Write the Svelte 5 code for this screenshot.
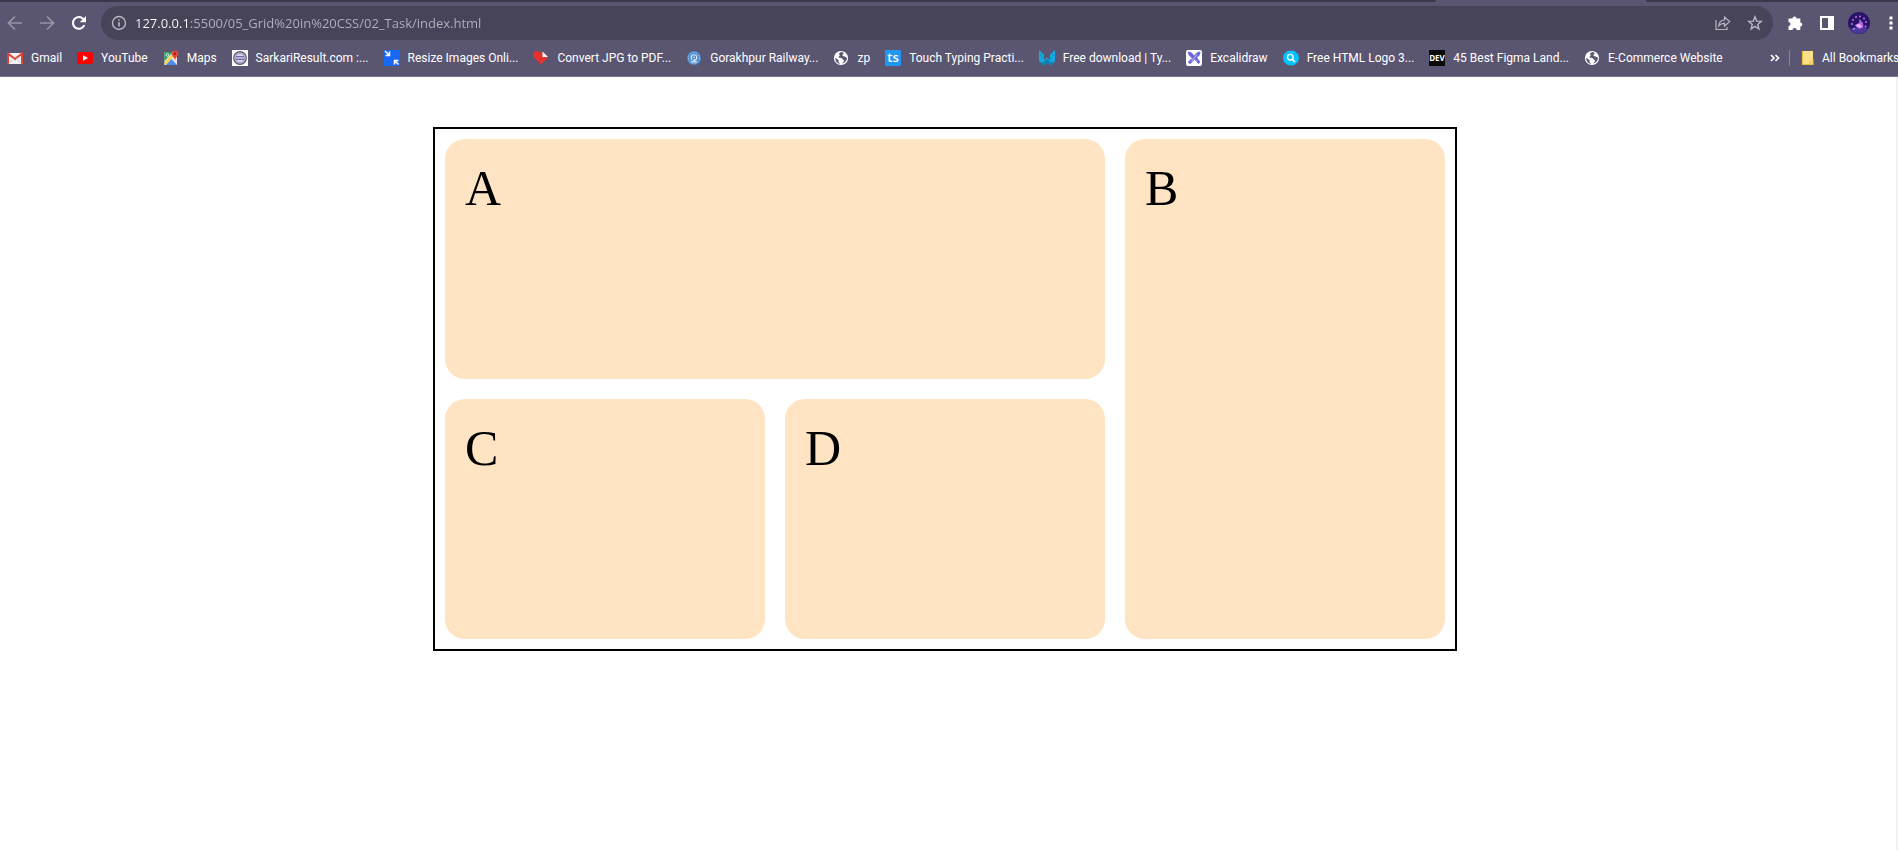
<script>
  let url = $state('127.0.0.1:5500/05_Grid%20in%20CSS/02_Task/index.html');

  const bookmarks = [
    { icon: 'gmail', label: 'Gmail' },
    { icon: 'youtube', label: 'YouTube' },
    { icon: 'maps', label: 'Maps' },
    { icon: 'sarkari', label: 'SarkariResult.com :...' },
    { icon: 'resize', label: 'Resize Images Onli...' },
    { icon: 'heart', label: 'Convert JPG to PDF...' },
    { icon: 'railway', label: 'Gorakhpur Railway...' },
    { icon: 'globe', label: 'zp' },
    { icon: 'ts', label: 'Touch Typing Practi...' },
    { icon: 'wings', label: 'Free download | Ty...' },
    { icon: 'excalidraw', label: 'Excalidraw' },
    { icon: 'search', label: 'Free HTML Logo 3...' },
    { icon: 'dev', label: '45 Best Figma Land...' },
    { icon: 'globe', label: 'E-Commerce Website' }
  ];

  const cells = ['A', 'B', 'C', 'D'];
</script>

{#snippet favicon(name)}
  <svg class="favicon" viewBox="0 0 16 16" aria-hidden="true">
    {#if name === 'gmail'}
      <path d="M1 3h14v11H1z" fill="#f3f1f1" />
      <path d="M1 14V3.500l7 5.500 7-5.500V14" fill="none" stroke="#dc4437" stroke-width="2" />
      <path d="M2 13.500 6.500 8.500M14 13.500 9.500 8.500" stroke="#d6d0d0" stroke-width="1" />
    {:else if name === 'youtube'}
      <rect x="0" y="2" width="16" height="12" rx="2.500" fill="#fe0000" />
      <path d="M6 5.300v5.400L11 8z" fill="#fff" />
    {:else if name === 'maps'}
      <path d="M1.500 2h12.500v13H1.500z" fill="#e8e8e4" />
      <path d="M1.500 2H10L1.500 11z" fill="#25a45c" />
      <path d="M1.500 12.500 10 3l2 2-9.500 10h-1z" fill="#fbd14b" />
      <path d="m3 15 5.500-6L14 15z" fill="#4a8cf4" />
      <path d="m9 8.500 5-3V14z" fill="#e4e4e4" />
      <circle cx="4.500" cy="5" r="1.400" fill="none" stroke="#d9f3e3" />
      <path d="M12 .5a3.300 3.300 0 0 0-3.300 3.300C8.700 6.500 11.500 7 12 10.500c.5-3.500 3.300-4 3.300-6.700A3.300 3.300 0 0 0 12 .5z" fill="#e5473a" />
      <circle cx="12" cy="3.800" r="1.200" fill="#842119" />
    {:else if name === 'sarkari'}
      <path d="M0 0h16v16H0z" fill="#fff" />
      <circle cx="8" cy="8" r="6.300" fill="#c9bedd" stroke="#5b5273" stroke-width="1.200" />
      <circle cx="8" cy="8" r="4.600" fill="#d8d3eb" stroke="#9a8fb5" stroke-width=".8" />
      <path d="M4 6.800h8M4 9.200h8" stroke="#504a86" stroke-width="1.100" />
    {:else if name === 'resize'}
      <path d="M0 0h16v16H0z" fill="#1769f5" />
      <path d="M1 1l4 4M5.500 1.500v4h-4" fill="none" stroke="#fff" stroke-width="1.500" />
      <path d="m14.500 14.500-4-4M10.500 14.500v-4h4" fill="none" stroke="#fff" stroke-width="1.500" />
    {:else if name === 'heart'}
      <path d="M8 14.500 1.500 8C-1 5 .5 1 4 1c2 0 3 .8 4 2l1-1.500 5.500 5c.5.500.5 1-.5 2z" fill="#e5322d" />
      <path d="M9.500 1.500V7H15z" fill="#fff" />
    {:else if name === 'railway'}
      <circle cx="8" cy="8" r="7" fill="#4b8ad0" />
      <circle cx="8" cy="8" r="5.500" fill="none" stroke="#9fc5ee" stroke-width=".9" stroke-dasharray="2 1" />
      <circle cx="8" cy="7.500" r="3.300" fill="#d3e5f7" />
      <path d="M6.800 11V6h2.600v2.600H7" fill="none" stroke="#4178b8" stroke-width="1" />
      <path d="M4.500 12.500 6 10.500h4l1.500 2z" fill="#c5dcf4" />
    {:else if name === 'globe'}
      <circle cx="8" cy="8" r="7.100" fill="#fff" />
      <path d="M2.300 7.800 5.500 10v2l1.700 2A6 6 0 0 1 2.300 7.800z" fill="#5a5672" />
      <path d="M8.200 2c-2.200 1-2.700 2-1.700 2.700 1 .8-.8 1.500-1 2.600-.2 1 3.500.3 4 1.700.3 1 1.600.8 1.700 1.800 0 1-1.700 1.200-1.700 2.700 3-1 4.500-3.200 4.500-5.700-1-.2-1.400-1.500-2.400-1.400-1.300 0-2.200-.4-2.200-1.400S11 4 10.700 2.700z" fill="#5a5672" />
    {:else if name === 'ts'}
      <rect width="16" height="16" rx="1" fill="#2196f3" />
      <text x="8" y="12" text-anchor="middle" class="ts">ts</text>
    {:else if name === 'wings'}
      <path d="M0 0c2 2.500 4 3 5 5v5l3-2.500 3 2.500V5c1-2 3-2.500 5-5v11l-4 4.500L8 13l-4 2.500L0 11z" fill="#12abe2" />
      <path d="m0 11 4 1.500L8 8.500l4 4 4-1.500-4 4.500L8 13l-4 2.500z" fill="#1380b5" />
      <path d="m1 4 4 6M15 4l-4 6" stroke="#0a97cc" stroke-width="1" />
    {:else if name === 'excalidraw'}
      <rect width="16" height="16" rx="2" fill="#fff" />
      <path d="M2 2c3 0 5 1.500 6 4.500C10 3 12 2 14 2c0 2.500-1.200 4.500-3.500 5.500L14 12l-1.500 1.500-4-4.200-4.300 4.500-2-1.700L6.800 8C4 7 2.500 5 2 2z" fill="#6965db" stroke="#6965db" stroke-width=".8" />
      <path d="m5.500 11.500 5.500-7M9 9.500l2 2" stroke="#fff" stroke-width=".6" />
    {:else if name === 'search'}
      <path d="M5 .8h6L15 4l1 4-1 4-4 3.200H5L1 12 0 8l1-4z" fill="#00c4ff" />
      <circle cx="7.300" cy="7.200" r="2.800" fill="none" stroke="#fff" stroke-width="1.400" />
      <path d="m9.300 9.300 2.700 2.700" stroke="#fff" stroke-width="1.600" />
    {:else if name === 'dev'}
      <path d="M0 0h16v16H0z" fill="#0a0a0a" />
      <text x="8" y="11" text-anchor="middle" class="dev">DEV</text>
    {/if}
  </svg>
{/snippet}

<header class="browser">
  <div class="tabstrip"><span class="tab"></span></div>

  <div class="toolbar">
    <button class="tool dim" aria-label="Back">
      <svg width="16" height="16" viewBox="0 0 16 16"><path d="M15 8H2M8 1.500 1.500 8 8 14.500" fill="none" stroke="currentColor" stroke-width="1.700" /></svg>
    </button>
    <button class="tool dim" aria-label="Forward">
      <svg width="16" height="16" viewBox="0 0 16 16"><path d="M1 8h13M8 1.500 14.500 8 8 14.500" fill="none" stroke="currentColor" stroke-width="1.700" /></svg>
    </button>
    <button class="tool" aria-label="Reload">
      <svg width="16" height="16" viewBox="0 0 16 16"><path d="M13.300 10.200A5.900 5.900 0 1 1 12.300 4" fill="none" stroke="currentColor" stroke-width="2.100" /><path d="M15 1v6.300H8.700z" fill="currentColor" /></svg>
    </button>

    <div class="omnibox">
      <svg width="16" height="16" viewBox="0 0 16 16" aria-hidden="true"><circle cx="8" cy="8" r="6.500" fill="none" stroke="currentColor" stroke-width="1.400" /><path d="M8 7v4.500M8 4.200v1.600" stroke="currentColor" stroke-width="1.600" /></svg>
      <input type="text" aria-label="Address" spellcheck="false" bind:value={url} />
      <button class="tool" aria-label="Share">
        <svg width="16" height="16" viewBox="0 0 16 16"><path d="M1 5v9.500h11V12M9.500 2v3C6 5.200 4 7.500 3.700 11c1.500-2 3.200-2.700 5.800-2.700v2.900L14.700 6.500z" fill="none" stroke="currentColor" stroke-width="1.200" /></svg>
      </button>
      <button class="tool" aria-label="Bookmark this page">
        <svg width="16" height="16" viewBox="0 0 16 16"><path d="m8 1.800 1.700 4.300 4.600.3-3.500 3 1.100 4.500L8 11.400l-3.900 2.500 1.100-4.500-3.500-3 4.600-.3z" fill="none" stroke="currentColor" stroke-width="1.400" /></svg>
      </button>
    </div>

    <button class="tool" aria-label="Extensions">
      <svg width="16" height="16" viewBox="0 0 16 16"><path d="M1.500 3.500h4a2 2 0 1 1 4 0h3.800v4a2 2 0 1 1 0 4V15H9.700a2.100 2.100 0 0 0-4.200 0h-4v-3.900a2 2 0 0 0 0-4z" fill="currentColor" /></svg>
    </button>
    <button class="tool" aria-label="Side panel">
      <svg width="16" height="16" viewBox="0 0 16 16"><path d="M1 1h14v14H1zM3 3v10h6V3z" fill="currentColor" fill-rule="evenodd" /></svg>
    </button>
    <button class="tool" aria-label="Profile">
      <svg width="22" height="22" viewBox="0 0 22 22">
        <circle cx="11" cy="11" r="11" fill="#2a1468" />
        <path d="M2 17a11 11 0 0 0 18 0c-4-3-14-3-18 0z" fill="#4b389c" />
        <path d="m7 13 4-2 .5-4 3.500 4 .5 4-4 2z" fill="#b060e4" />
        <path d="m7 13.500 4 2.500 3.500-1-3-3.500z" fill="#eaa8fb" />
        <g fill="#b274e4"><circle cx="5" cy="8" r="1" /><circle cx="8" cy="5" r="1" /><circle cx="12" cy="4.500" r="1" /><circle cx="16" cy="6.500" r="1" /><circle cx="18" cy="10" r="1" /><circle cx="4" cy="12" r="1" /><circle cx="17.500" cy="14.500" r="1" /><circle cx="6" cy="17" r="1" /></g>
      </svg>
    </button>
    <button class="tool menu" aria-label="Menu">
      <svg width="6" height="16" viewBox="0 0 6 16"><path d="M1.500 1.500h3v3h-3zM1.500 6.500h3v3h-3zM1.500 11.500h3v3h-3z" fill="currentColor" /></svg>
    </button>
  </div>

  <nav class="bookmarks" aria-label="Bookmarks">
    <div class="links">
      {#each bookmarks as bookmark}
        <a href="#top">{@render favicon(bookmark.icon)}<span>{bookmark.label}</span></a>
      {/each}
    </div>
    <button class="more" aria-label="More bookmarks">
      <svg width="10" height="8" viewBox="0 0 10 8"><path d="m1 1 3 3-3 3M5.500 1l3 3-3 3" fill="none" stroke="currentColor" stroke-width="1.600" /></svg>
    </button>
    <button class="all">
      <svg width="16" height="16" viewBox="0 0 16 16" aria-hidden="true"><path d="M2 1h11v14H2z" fill="#ffe08a" /><path d="M2.500 1v13.500H10M13 9v5.500h-3V11" fill="none" stroke="#e9bd3d" stroke-width="1.200" /></svg>
      <span>All Bookmarks</span>
    </button>
  </nav>
</header>

<main id="top">
  <div class="grid">
    {#each cells as cell}
      <section class="cell" class:wide={cell === 'A'} class:tall={cell === 'B'}>{cell}</section>
    {/each}
  </div>
</main>

<style>
  :global(body) {
    background: #fff;
  }

  .browser {
    overflow: hidden;
    background: #5a5672;
    border-bottom: 1px solid #7c7892;
    color: #fff;
    font-family: 'Open Sans', 'Noto Sans', sans-serif;
  }

  button {
    margin: 0;
    padding: 0;
    border: 0;
    background: none;
    color: inherit;
    font: inherit;
  }

  svg {
    display: block;
    flex: none;
  }

  .tabstrip {
    display: flex;
    justify-content: flex-end;
    height: 2px;
    padding-right: 251px;
    background: #3b374b;
  }

  .tab {
    width: 212px;
    border-radius: 2px 2px 0 0;
    background: #5a5672;
  }

  .toolbar {
    display: flex;
    align-items: center;
    gap: 4px;
    padding: 4px 0 1px 1px;
  }

  .tool {
    display: flex;
    flex: none;
    align-items: center;
    justify-content: center;
    width: 28px;
    height: 28px;
  }

  .dim {
    color: #9794a6;
  }

  .menu {
    justify-content: flex-start;
    width: 21px;
    padding-left: 11px;
  }

  .omnibox {
    display: flex;
    flex: 1;
    align-items: center;
    gap: 4px;
    min-width: 0;
    height: 34px;
    margin: 0 4px;
    padding: 0 4px 0 10px;
    box-sizing: border-box;
    border-radius: 17px;
    background: #474459;
    color: #b9b7c3;
  }

  .omnibox input {
    flex: 1;
    min-width: 0;
    height: 24px;
    margin-left: 4px;
    padding: 0;
    border: 0;
    outline: 0;
    background: linear-gradient(to right, #fff 54px, #b3b1be 54px);
    background-clip: text;
    color: transparent;
    font: 13px/24px 'Open Sans', 'Noto Sans', sans-serif;
  }

  .bookmarks {
    display: flex;
    align-items: center;
    height: 35px;
    padding: 0 0 2px 7px;
    box-sizing: border-box;
    font-family: Roboto, 'Open Sans', sans-serif;
    font-size: 12px;
    line-height: 16px;
    white-space: nowrap;
  }

  .links {
    display: flex;
    flex: 1;
    gap: 15px;
    min-width: 0;
    overflow: hidden;
  }

  .links a {
    display: flex;
    align-items: center;
    gap: 8px;
    color: inherit;
    text-decoration: none;
  }

  .favicon {
    width: 16px;
    height: 16px;
  }

  .ts {
    fill: #fff;
    font: 600 13px 'Open Sans', sans-serif;
  }

  .dev {
    fill: #fff;
    font: 700 8px 'Open Sans', sans-serif;
  }

  .more {
    padding: 4px 9px;
  }

  .all {
    display: flex;
    align-items: center;
    gap: 6px;
    width: 109px;
    padding-left: 10px;
    box-sizing: border-box;
    border-left: 1px solid #8783a0;
  }

  main {
    min-height: calc(100vh - 77px);
    padding: 50px 6px 50px 0;
    box-sizing: border-box;
    border-right: 2px solid #f1f1f1;
  }

  .grid {
    display: grid;
    grid-template-columns: repeat(3, 1fr);
    grid-auto-rows: 240px;
    gap: 20px;
    max-width: 1000px;
    margin: 0 auto;
    padding: 10px;
    border: 2px solid #000;
  }

  .cell {
    padding: 20px;
    border-radius: 20px;
    background: #ffe4c4;
    color: #000;
    font-family: 'Liberation Serif', 'Times New Roman', serif;
    font-size: 50px;
  }

  .wide {
    grid-column: span 2;
  }

  .tall {
    grid-row: span 2;
  }
</style>
